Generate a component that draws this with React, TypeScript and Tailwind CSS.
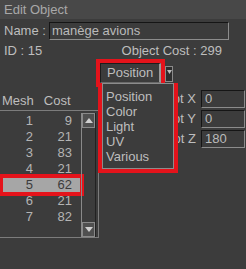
import React from "react";

const rows = [
  { mesh: 1, cost: 9 },
  { mesh: 2, cost: 21 },
  { mesh: 3, cost: 83 },
  { mesh: 4, cost: 21 },
  { mesh: 5, cost: 62 },
  { mesh: 6, cost: 21 },
  { mesh: 7, cost: 82 },
];

const options = ["Position", "Color", "Light", "UV", "Various"];

const rot = [
  { label: "Rot X", value: "0" },
  { label: "Rot Y", value: "0" },
  { label: "Rot Z", value: "180" },
];

const App: React.FC = () => {
  return (
    <div className="relative w-[246px] h-[269px] overflow-hidden bg-[#3c3c3c] font-['Liberation_Sans',Arial,sans-serif] text-[13px] text-[#bebebe]">
      {/* Title */}
      <div className="h-[19px] bg-[#484848] pl-[4px] leading-[19px] text-[#a8a8a8]">Edit Object</div>

      {/* Name */}
      <div className="mt-[3px] flex h-[18px] items-center">
        <span className="w-[49px] pl-[4px]">Name :</span>
        <div className="h-[18px] w-[180px] border border-t-[#151515] border-l-[#151515] border-r-[#8c8c8c] border-b-[#8c8c8c] pl-[2px] leading-[16px] text-[#bababa]">
          manège avions
        </div>
      </div>

      {/* ID / cost */}
      <div className="mt-[3px] flex h-[16px] items-center">
        <span className="pl-[4px]">ID : 15</span>
        <span className="ml-auto mr-[24px]">Object Cost : 299</span>
      </div>

      {/* select row spacer */}
      <div className="h-[28px] mt-[2px]" />

      {/* lower section */}
      <div className="flex">
        <div className="w-[99px]">
          <div className="flex h-[21px] items-center pt-[2px]">
            <span className="pl-[2px]">Mesh</span>
            <span className="ml-[10px]">Cost</span>
          </div>
          <div className="flex h-[128px] border-t border-r border-b border-[#7c7c7c]">
            <div className="flex w-[81px] flex-col gap-[2px] pt-[3px] text-[#b4b4b4]">
              {rows.map((r) => (
                <div
                  key={r.mesh}
                  className={
                    r.mesh === 5
                      ? "ml-[3px] flex h-[14px] w-[77px] items-center bg-[#a6a6a6] text-[#3c3c3c] outline-4 outline-[#e4131b]"
                      : "ml-[3px] flex h-[14px] w-[77px] items-center"
                  }
                >
                  <span className="w-[30px] text-right">{r.mesh}</span>
                  <span className="w-[39px] text-right">{r.cost}</span>
                </div>
              ))}
            </div>
            {/* scrollbar */}
            <div className="mt-[2px] flex h-[124px] w-[15px] flex-col border-l border-l-[#8a8a8a] border-r border-r-[#222]">
              <div className="flex h-[15px] items-center justify-center border border-[#8a8a8a] bg-[#505050]">
                <svg width="8" height="5" viewBox="0 0 8 5">
                  <path d="M0 5 L4 0 L8 5 Z" fill="#d0d0d0" />
                </svg>
              </div>
              <div className="flex-1" />
              <div className="flex h-[15px] items-center justify-center border border-[#8a8a8a] bg-[#505050]">
                <svg width="8" height="5" viewBox="0 0 8 5">
                  <path d="M0 0 L8 0 L4 5 Z" fill="#d0d0d0" />
                </svg>
              </div>
            </div>
          </div>
        </div>

        {/* rotation */}
        <div className="flex flex-1 flex-col">
          {rot.map((r) => (
            <div key={r.label} className="flex h-[20px] items-center">
              <span className="w-[102px] pr-[5px] text-right">{r.label}</span>
              <div className="h-[18px] w-[44px] border border-t-[#151515] border-l-[#151515] border-r-[#8c8c8c] border-b-[#8c8c8c] pl-[3px] leading-[16px] text-[#bababa]">
                {r.value}
              </div>
            </div>
          ))}
        </div>
      </div>

      {/* open select */}
      <div className="absolute left-[96px] top-[59px] h-[28px] w-[69px] border-4 border-[#e4131b]">
        <div className="h-full w-full border border-t-[#1c1c1c] border-l-[#1c1c1c] border-r-[#9a9a9a] border-r-2 border-b-[#6a6a6a] pl-[6px] leading-[18px]">
          Position
        </div>
      </div>
      <div className="absolute left-[165px] top-[66px] flex h-[16px] w-[8px] items-start justify-center border border-[#8a8a8a] bg-[#2e2e2e] pt-[3px]">
        <svg width="5" height="4" viewBox="0 0 5 4">
          <path d="M0 0 L5 0 L2.5 4 Z" fill="#bcbcbc" />
        </svg>
      </div>
      <div className="absolute left-[98px] top-[83px] h-[90px] w-[80px] border-4 border-t-0 border-[#e4131b]">
        <div className="h-full w-full border border-[#8c8c8c] bg-[#3c3c3c] pl-[3px] pt-[5px]">
          {options.map((o) => (
            <div key={o} className="h-[15px] leading-[15px]">
              {o}
            </div>
          ))}
        </div>
      </div>
    </div>
  );
};

export default App;
